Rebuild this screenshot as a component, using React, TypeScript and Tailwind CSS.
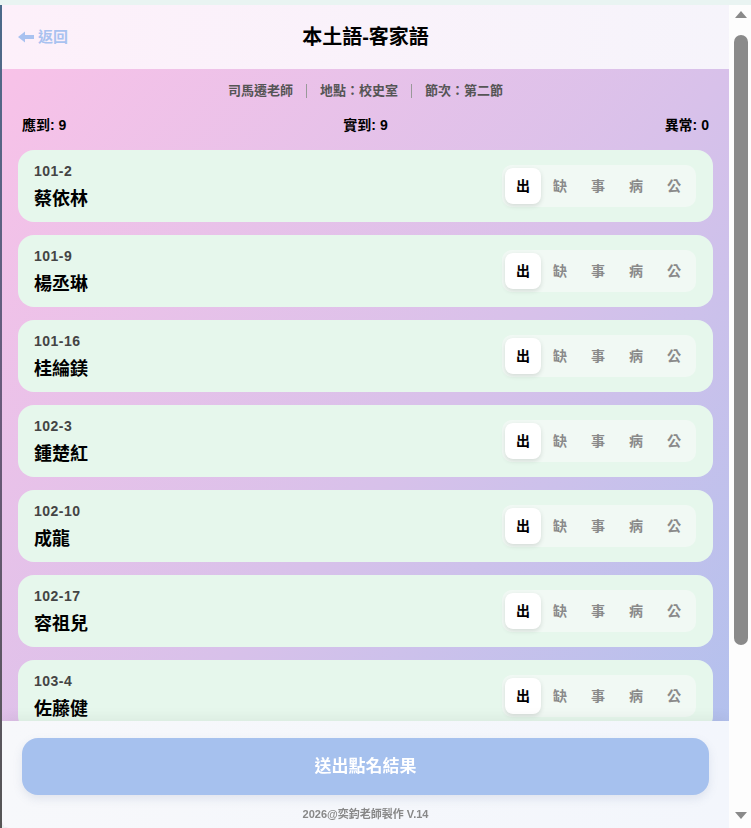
import { useState } from "react";

type Status = "出" | "缺" | "事" | "病" | "公";

const STATUSES: Status[] = ["出", "缺", "事", "病", "公"];

const STUDENTS = [
  { id: "101-2", name: "蔡依林" },
  { id: "101-9", name: "楊丞琳" },
  { id: "101-16", name: "桂綸鎂" },
  { id: "102-3", name: "鍾楚紅" },
  { id: "102-10", name: "成龍" },
  { id: "102-17", name: "容祖兒" },
  { id: "103-4", name: "佐藤健" },
  { id: "103-11", name: "林志玲" },
  { id: "104-5", name: "周杰倫" },
];

const font = { fontFamily: '"Liberation Sans", "Noto Sans CJK TC", sans-serif' };

function StudentCard({
  id,
  name,
  status,
  onChange,
}: {
  id: string;
  name: string;
  status: Status;
  onChange: (s: Status) => void;
}) {
  return (
    <div className="flex items-center justify-between rounded-2xl bg-[#e6f7ec] pl-4 pr-[17px] h-[72px]">
      <div className="flex flex-col">
        <span className="text-[14px] font-bold leading-[18px] tracking-[0.5px] text-[#444]">{id}</span>
        <span className="mt-[7px] text-[18px] font-bold leading-[24px] text-black">{name}</span>
      </div>
      <div className="flex rounded-[10px] bg-[#f1f9f4] p-[3px]">
        {STATUSES.map((s) => (
          <button
            key={s}
            onClick={() => onChange(s)}
            className={
              s === status
                ? "h-[36px] w-[36px] rounded-[8px] bg-white text-[14px] font-bold text-black shadow-[0_2px_5px_rgba(0,0,0,0.12)] cursor-pointer"
                : "h-[36px] w-[38px] rounded-[8px] text-[14px] font-bold text-[#8a8a8a] cursor-pointer"
            }
          >
            {s}
          </button>
        ))}
      </div>
    </div>
  );
}

// drawn stand-in for the classic browser scrollbar seen in the screenshot
function FakeScrollbar() {
  return (
    <div className="flex w-[22px] shrink-0 flex-col items-center bg-[#fdfdfd] pl-[2px]">
      <svg className="mt-[5px]" width="14" height="9" viewBox="0 0 14 9" fill="#8a8a8a">
        <path d="M7 1 L13 8 H1 Z" />
      </svg>
      <div className="mt-[16px] h-[610px] w-[14px] rounded-full bg-[#8a8a8a]" />
      <div className="flex-1" />
      <svg className="mb-[8px]" width="14" height="9" viewBox="0 0 14 9" fill="#8a8a8a">
        <path d="M1 1 H13 L7 8 Z" />
      </svg>
    </div>
  );
}

export default function App() {
  const [statuses, setStatuses] = useState<Record<string, Status>>(
    Object.fromEntries(STUDENTS.map((s) => [s.id, "出" as Status]))
  );
  const abnormal = Object.values(statuses).filter((s) => s !== "出").length;

  return (
    <div className="h-screen w-full bg-[#e9f4f2] pt-[5px] flex overflow-hidden" style={font}>
      <div className="w-[2px] h-full bg-gradient-to-b from-[#4a6a8a] via-[#6a5a7a] to-[#555]" />
      <div className="flex flex-1 h-[823px] overflow-hidden rounded-bl-md bg-white">
        <div className="flex-1 overflow-y-auto [scrollbar-width:none]">
          <header className="sticky top-0 z-10 grid h-[64px] grid-cols-[1fr_auto_1fr] items-center bg-gradient-to-r from-[#fdf0fa] to-[#f6f4fb] px-4">
            <button className="flex items-center gap-1 justify-self-start text-[15px] font-bold text-[#a9c2f0]">
              <svg width="16" height="12" viewBox="0 0 16 12" fill="currentColor">
                <path d="M0 6 L7 0.5 V4 H16 V8 H7 V11.5 Z" />
              </svg>
              返回
            </button>
            <h1 className="text-[20px] font-bold text-black">本土語-客家語</h1>
            <div />
          </header>

          <main className="bg-gradient-to-br from-[#f8c2e8] via-[#d8c1ea] to-[#a6c0ee] px-4 pt-[13px] pb-5">
            <div className="flex items-center justify-center gap-[13px] text-[13px] font-bold leading-[18px] text-[#555]">
              <span>司馬遷老師</span>
              <span className="h-[14px] w-px bg-[#999]" />
              <span>地點：校史室</span>
              <span className="h-[14px] w-px bg-[#999]" />
              <span>節次：第二節</span>
            </div>
            <div className="mt-[16px] flex items-center justify-between px-1 text-[14px] font-bold leading-[18px] text-black">
              <span>應到: {STUDENTS.length}</span>
              <span>實到: {STUDENTS.length - abnormal}</span>
              <span>異常: {abnormal}</span>
            </div>
            <div className="mt-[16px] flex flex-col gap-[13px]">
              {STUDENTS.map((s) => (
                <StudentCard
                  key={s.id}
                  id={s.id}
                  name={s.name}
                  status={statuses[s.id]}
                  onChange={(v) => setStatuses({ ...statuses, [s.id]: v })}
                />
              ))}
            </div>
          </main>

          <footer className="sticky bottom-0 z-10 bg-gradient-to-r from-[#f7f8fb] to-[#f3f6fc] px-5 pt-[17px] pb-[7px] shadow-[0_-4px_12px_rgba(0,0,0,0.05)]">
            <button className="h-[57px] w-full rounded-2xl bg-[#a6c1ee] text-[17px] font-bold text-white shadow-[0_4px_10px_rgba(100,120,160,0.15)]">
              送出點名結果
            </button>
            <p className="mt-[12px] text-center text-[11px] font-bold leading-[14px] text-[#888]">2026@奕鈞老師製作 V.14</p>
          </footer>
        </div>
        <FakeScrollbar />
      </div>
    </div>
  );
}
